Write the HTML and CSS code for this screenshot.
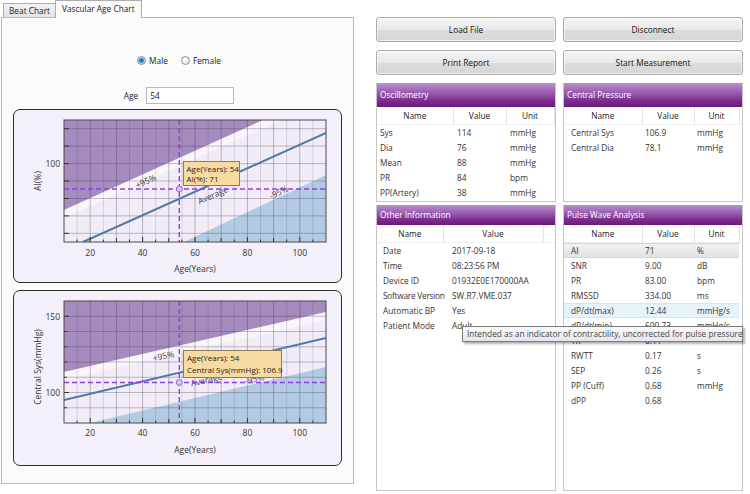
FILE: index.html
```html
<!DOCTYPE html>
<html>
<head>
<meta charset="utf-8">
<link rel="stylesheet" href="styles.css">
</head>
<body>
<div class="app">
  <div class="left">
    <div class="tabs">
      <div class="tab">Beat Chart</div>
      <div class="tab active">Vascular Age Chart</div>
    </div>
    <div class="tab-panel">
      <div class="gender">
        <span class="radio-item"><span class="radio checked"></span>Male</span>
        <span class="radio-item"><span class="radio"></span>Female</span>
      </div>
      <div class="age-row"><span class="age-label">Age</span><div class="age-input">54</div></div>

      <div class="chart chart1">
        <svg width="329" height="174" viewBox="0 0 329 174">
          <defs><clipPath id="c1"><rect x="51" y="11" width="262" height="122"/></clipPath></defs>
          <g clip-path="url(#c1)">
            <rect x="51" y="11" width="262" height="122" fill="#f2ecf7"/>
            <polygon points="51,11 250,11 51,101" fill="#a68bbf"/>
            <polygon points="250,11 268,11 51,109 51,101" fill="#ffffff" opacity="0.5"/>
            <polygon points="171,133 313,66 313,133" fill="#b2cbe2"/>
            <path d="M64.1 11V133M90.3 11V133M116.5 11V133M142.7 11V133M168.9 11V133M195.1 11V133M221.3 11V133M247.5 11V133M273.7 11V133M299.9 11V133" stroke="rgba(60,50,70,0.16)" stroke-width="1"/>
            <path d="M77.2 11V133M103.4 11V133M129.6 11V133M155.8 11V133M182 11V133M208.2 11V133M234.4 11V133M260.6 11V133M286.8 11V133" stroke="rgba(60,50,70,0.32)" stroke-width="1"/>
            <path d="M51 19.7H313M51 37.1H313M51 54.6H313M51 72H313M51 89.5H313M51 106.9H313M51 124.3H313" stroke="rgba(60,50,70,0.3)" stroke-width="1"/>
            <line x1="70" y1="133" x2="313" y2="24" stroke="#4f7aa8" stroke-width="2"/>
            <text class="band-label" transform="translate(134,75) rotate(-24)">+95%</text>
            <text class="band-label" transform="translate(201,89) rotate(-24)">Average</text>
            <text class="band-label" transform="translate(267,86) rotate(-25)">-95%</text>
            <line x1="51" y1="80" x2="313" y2="80" class="cross"/>
            <line x1="166.3" y1="11" x2="166.3" y2="133" class="cross"/>
            <circle cx="166.3" cy="80" r="3" fill="#d9c6ee" stroke="#9c5fd0" stroke-width="1"/>
          </g>
          <rect x="51" y="11" width="262" height="122" fill="none" stroke="#4a4a4a" stroke-width="1"/>
          <path d="M77.2 133V128M129.6 133V128M182 133V128M234.4 133V128M286.8 133V128M103.4 133V129M155.8 133V129M208.2 133V129M260.6 133V129M64.1 133V130.5M90.3 133V130.5M116.5 133V130.5M142.7 133V130.5M168.9 133V130.5M195.1 133V130.5M221.3 133V130.5M247.5 133V130.5M273.7 133V130.5M299.9 133V130.5" stroke="#333" stroke-width="1"/>
          <path d="M51 19.7H56M51 37.1H56M51 54.6H56M51 72H56M51 89.5H56M51 106.9H56M51 124.3H56" stroke="#333" stroke-width="1"/>
          <text class="tick" x="47" y="57.5" text-anchor="end">100</text>
          <text class="tick" x="77.2" y="147" text-anchor="middle">20</text>
          <text class="tick" x="129.6" y="147" text-anchor="middle">40</text>
          <text class="tick" x="182" y="147" text-anchor="middle">60</text>
          <text class="tick" x="234.4" y="147" text-anchor="middle">80</text>
          <text class="tick" x="286.8" y="147" text-anchor="middle">100</text>
          <text class="axis-title" x="182" y="163" text-anchor="middle">Age(Years)</text>
          <text class="axis-title" transform="translate(28,72) rotate(-90)" text-anchor="middle">AI(%)</text>
          <rect x="170.5" y="52.5" width="56" height="24" fill="#f7dba1" stroke="#8d7d5c" stroke-width="1"/>
          <text class="tip" x="173.5" y="62.5">Age(Years): 54</text>
          <text class="tip" x="173.5" y="73">AI(%): 71</text>
        </svg>
      </div>

      <div class="chart chart2">
        <svg width="329" height="176" viewBox="0 0 329 176">
          <defs><clipPath id="c2"><rect x="51" y="11" width="262" height="122"/></clipPath></defs>
          <g clip-path="url(#c2)">
            <rect x="51" y="11" width="262" height="122" fill="#f2ecf7"/>
            <polygon points="51,11 313,11 313,22 51,82" fill="#a68bbf"/>
            <polygon points="51,82 313,22 313,30 51,90" fill="#ffffff" opacity="0.5"/>
            <polygon points="77,133 313,77 313,133" fill="#b2cbe2"/>
            <path d="M64.1 11V133M90.3 11V133M116.5 11V133M142.7 11V133M168.9 11V133M195.1 11V133M221.3 11V133M247.5 11V133M273.7 11V133M299.9 11V133" stroke="rgba(60,50,70,0.16)" stroke-width="1"/>
            <path d="M77.2 11V133M103.4 11V133M129.6 11V133M155.8 11V133M182 11V133M208.2 11V133M234.4 11V133M260.6 11V133M286.8 11V133" stroke="rgba(60,50,70,0.32)" stroke-width="1"/>
            <path d="M51 26.25H313M51 41.5H313M51 56.75H313M51 72H313M51 87.25H313M51 102.5H313M51 117.75H313" stroke="rgba(60,50,70,0.3)" stroke-width="1"/>
            <line x1="51" y1="110" x2="313" y2="48" stroke="#4f7aa8" stroke-width="2"/>
            <text class="band-label" transform="translate(151,69) rotate(-13)">+95%</text>
            <text class="band-label" transform="translate(194,93) rotate(-13)">Average</text>
            <text class="band-label" transform="translate(242,92) rotate(-13)">-95%</text>
            <line x1="51" y1="92.5" x2="313" y2="92.5" class="cross"/>
            <line x1="166.3" y1="11" x2="166.3" y2="133" class="cross"/>
            <circle cx="166.3" cy="92.5" r="3" fill="#d9c6ee" stroke="#9c5fd0" stroke-width="1"/>
          </g>
          <rect x="51" y="11" width="262" height="122" fill="none" stroke="#4a4a4a" stroke-width="1"/>
          <path d="M77.2 133V128M129.6 133V128M182 133V128M234.4 133V128M286.8 133V128M103.4 133V129M155.8 133V129M208.2 133V129M260.6 133V129M64.1 133V130.5M90.3 133V130.5M116.5 133V130.5M142.7 133V130.5M168.9 133V130.5M195.1 133V130.5M221.3 133V130.5M247.5 133V130.5M273.7 133V130.5M299.9 133V130.5" stroke="#333" stroke-width="1"/>
          <path d="M51 26.25H56M51 41.5H54M51 56.75H54M51 72H54M51 87.25H54M51 102.5H56M51 117.75H54" stroke="#333" stroke-width="1"/>
          <text class="tick" x="47" y="29.5" text-anchor="end">150</text>
          <text class="tick" x="47" y="105.5" text-anchor="end">100</text>
          <text class="tick" x="77.2" y="146" text-anchor="middle">20</text>
          <text class="tick" x="129.6" y="146" text-anchor="middle">40</text>
          <text class="tick" x="182" y="146" text-anchor="middle">60</text>
          <text class="tick" x="234.4" y="146" text-anchor="middle">80</text>
          <text class="tick" x="286.8" y="146" text-anchor="middle">100</text>
          <text class="axis-title" x="182" y="163" text-anchor="middle">Age(Years)</text>
          <text class="axis-title" transform="translate(28,77) rotate(-90)" text-anchor="middle">Central Sys(mmHg)</text>
          <rect x="170.5" y="60.5" width="98" height="27" fill="#f7dba1" stroke="#8d7d5c" stroke-width="1"/>
          <text class="tip" x="174" y="71">Age(Years): 54</text>
          <text class="tip" x="174" y="83">Central Sys(mmHg): 106.9</text>
        </svg>
      </div>
    </div>
  </div>

  <div class="right">
    <div class="col">
      <button class="btn">Load File</button>
      <button class="btn">Print Report</button>
      <section class="panel top">
        <div class="panel-head">Oscillometry</div>
        <table class="tbl osc">
          <tr class="hd"><th>Name</th><th>Value</th><th>Unit</th><th class="fill"></th></tr>
          <tr><td>Sys</td><td>114</td><td>mmHg</td><td></td></tr>
          <tr><td>Dia</td><td>76</td><td>mmHg</td><td></td></tr>
          <tr><td>Mean</td><td>88</td><td>mmHg</td><td></td></tr>
          <tr><td>PR</td><td>84</td><td>bpm</td><td></td></tr>
          <tr><td>PP(Artery)</td><td>38</td><td>mmHg</td><td></td></tr>
        </table>
      </section>
      <section class="panel bottom">
        <div class="panel-head short">Other Information</div>
        <table class="tbl other">
          <tr class="hd"><th>Name</th><th>Value</th><th class="fill"></th></tr>
          <tr><td>Date</td><td>2017-09-18</td><td></td></tr>
          <tr><td>Time</td><td>08:23:56 PM</td><td></td></tr>
          <tr><td>Device ID</td><td>01932E0E170000AA</td><td></td></tr>
          <tr><td class="tight">Software Version</td><td>SW.R7.VME.037</td><td></td></tr>
          <tr><td>Automatic BP</td><td>Yes</td><td></td></tr>
          <tr><td>Patient Mode</td><td>Adult</td><td></td></tr>
        </table>
      </section>
    </div>
    <div class="col">
      <button class="btn">Disconnect</button>
      <button class="btn">Start Measurement</button>
      <section class="panel top">
        <div class="panel-head">Central Pressure</div>
        <table class="tbl cp">
          <tr class="hd"><th>Name</th><th>Value</th><th>Unit</th><th class="fill"></th></tr>
          <tr><td>Central Sys</td><td>106.9</td><td>mmHg</td><td></td></tr>
          <tr><td>Central Dia</td><td>78.1</td><td>mmHg</td><td></td></tr>
        </table>
      </section>
      <section class="panel bottom">
        <div class="panel-head short">Pulse Wave Analysis</div>
        <table class="tbl cp">
          <tr class="hd"><th>Name</th><th>Value</th><th>Unit</th><th class="fill"></th></tr>
          <tr class="sel"><td>AI</td><td>71</td><td>%</td><td></td></tr>
          <tr><td>SNR</td><td>9.00</td><td>dB</td><td></td></tr>
          <tr><td>PR</td><td>83.00</td><td>bpm</td><td></td></tr>
          <tr><td>RMSSD</td><td>334.00</td><td>ms</td><td></td></tr>
          <tr class="hover"><td>dP/dt(max)</td><td>12.44</td><td>mmHg/s</td><td></td></tr>
          <tr class="under"><td>dP/dt(min)</td><td>600.73</td><td>mmHg/s</td><td></td></tr>
          <tr><td>TR</td><td>0.11</td><td></td><td></td></tr>
          <tr><td>RWTT</td><td>0.17</td><td>s</td><td></td></tr>
          <tr><td>SEP</td><td>0.26</td><td>s</td><td></td></tr>
          <tr><td>PP (Cuff)</td><td>0.68</td><td>mmHg</td><td></td></tr>
          <tr><td>dPP</td><td>0.68</td><td></td><td></td></tr>
        </table>
      </section>
    </div>
  </div>

  <div class="tooltip">Intended as an indicator of contractility, uncorrected for pulse pressure</div>
</div>
</body>
</html>
```

FILE: styles.css
```css
html, body {
  margin: 0;
  padding: 0;
  background: #ffffff;
  overflow: hidden;
}
body {
  font-family: "Open Sans", "Noto Sans", sans-serif;
  font-size: 8.3px;
  color: #222;
}
.app {
  position: relative;
  display: flex;
  width: 750px;
  height: 494px;
}

/* ---------- left tab control ---------- */
.left {
  width: 353px;
  margin-left: 1px;
  display: flex;
  flex-direction: column;
}
.tabs {
  height: 17px;
  display: flex;
  align-items: flex-end;
  padding-left: 2px;
  position: relative;
  z-index: 2;
}
.tab {
  height: 14px;
  box-sizing: border-box;
  padding: 0 5px;
  line-height: 13px;
  border: 1px solid #acacac;
  border-bottom: none;
  background: linear-gradient(#f2f2f2, #e3e3e3);
  color: #222;
  white-space: nowrap;
}
.tab.active {
  height: 18px;
  margin-bottom: -1px;
  margin-left: -1px;
  line-height: 15px;
  background: #fbfbfb;
  padding: 0 6px;
}
.tab-panel {
  height: 467px;
  box-sizing: border-box;
  border: 1px solid #b9b9b9;
  background: #fbfbfb;
  display: flex;
  flex-direction: column;
  padding-top: 36px;
}
.gender {
  display: flex;
  justify-content: center;
  gap: 13px;
  height: 12px;
  align-items: center;
  padding-left: 3px;
}
.radio-item {
  display: flex;
  align-items: center;
  color: #222;
}
.radio {
  width: 9px;
  height: 9px;
  box-sizing: border-box;
  border-radius: 50%;
  border: 1px solid #8e9194;
  background: radial-gradient(circle at 45% 40%, #ffffff, #dadada);
  margin-right: 3px;
}
.radio.checked {
  background: radial-gradient(circle, #256ea0 0, #3a88bb 2px, #9fcbe6 2.8px, #eef4f8 4px);
}
.age-row {
  margin-top: 21px;
  display: flex;
  justify-content: center;
  align-items: center;
  gap: 8px;
  padding-left: 3px;
}
.age-label {
  color: #222;
}
.age-input {
  width: 88px;
  height: 17px;
  box-sizing: border-box;
  border: 1px solid #b5b8bd;
  background: #fff;
  padding-left: 3px;
  line-height: 15px;
}
.chart {
  margin-left: 11px;
  width: 329px;
  box-sizing: border-box;
  border: 1.5px solid #2e2e2e;
  border-radius: 7px;
  background: #f4f0f9;
  overflow: hidden;
}
.chart1 {
  margin-top: 5px;
  height: 174px;
}
.chart2 {
  margin-top: 7px;
  height: 176px;
}
.chart svg {
  display: block;
  margin: -1.5px 0 0 -1.5px;
}
.chart text {
  font-family: "Open Sans", "Noto Sans", sans-serif;
  fill: #333;
}
.chart .tick {
  font-size: 8.5px;
}
.chart .axis-title {
  font-size: 8.5px;
}
.chart .band-label {
  font-size: 8.5px;
  text-anchor: middle;
  fill: #444;
}
.chart .tip {
  font-size: 8px;
  fill: #222;
}
.chart .cross {
  stroke: #8f3fe0;
  stroke-width: 1.4;
  stroke-dasharray: 5 3;
}

/* ---------- right side ---------- */
.right {
  margin-left: 22px;
  display: flex;
  gap: 7px;
  padding-top: 17px;
}
.col {
  width: 180px;
  display: flex;
  flex-direction: column;
}
.btn {
  height: 25px;
  margin: 0 0 8px 0;
  padding: 0;
  font-family: inherit;
  font-size: 8.3px;
  color: #111;
  border: 1px solid #a9a9a9;
  border-radius: 3px;
  background: linear-gradient(#f5f5f5, #e8e8e8 50%, #dcdcdc 51%, #d6d6d6);
  box-shadow: inset 0 0 0 1px rgba(255,255,255,0.6);
}
.panel {
  box-sizing: border-box;
  border: 1px solid #c6c6c6;
  border-top: none;
  background: #fff;
  overflow: hidden;
}
.panel.top {
  height: 119px;
}
.panel.bottom {
  margin-top: 3px;
  height: 286px;
}
.panel-head {
  height: 24px;
  margin: 0 -1px;
  padding-left: 4px;
  line-height: 24px;
  color: #fff;
  background: linear-gradient(#bc8fcd, #9656ab 45%, #7a2b8d 75%, #6a1a7d);
}
.panel-head.short {
  height: 20px;
  line-height: 19px;
}
.tbl {
  border-collapse: collapse;
  table-layout: fixed;
  width: 178px;
}
.tbl th {
  height: 17px;
  padding: 0;
  font-weight: normal;
  text-align: center;
  color: #222;
  border-right: 1px solid #e4e4e4;
  border-bottom: 1px solid #efefef;
}
.tbl th.fill {
  border-right: none;
}
.tbl td {
  height: 15px;
  padding: 0;
  line-height: 15px;
  white-space: nowrap;
  overflow: visible;
  color: #333;
}
.tbl td.tight {
  letter-spacing: -0.25px;
}
/* Oscillometry columns */
.osc th:nth-child(1), .osc td:nth-child(1) { width: 76px; }
.osc th:nth-child(2), .osc td:nth-child(2) { width: 52px; }
.osc th:nth-child(3), .osc td:nth-child(3) { width: 47px; }
.osc td:nth-child(1) { padding-left: 3px; }
.osc td:nth-child(2), .osc td:nth-child(3) { padding-left: 4px; }
/* Central / pulse wave columns */
.cp th:nth-child(1), .cp td:nth-child(1) { width: 78px; }
.cp th:nth-child(2), .cp td:nth-child(2) { width: 51px; }
.cp th:nth-child(3), .cp td:nth-child(3) { width: 44px; }
.cp td:nth-child(1) { padding-left: 7px; }
.cp td:nth-child(2), .cp td:nth-child(3) { padding-left: 3px; }
/* Other info columns */
.other th:nth-child(1), .other td:nth-child(1) { width: 66px; }
.other th:nth-child(2), .other td:nth-child(2) { width: 99px; }
.other td:nth-child(1) { padding-left: 6px; }
.other td:nth-child(2) { padding-left: 9px; }
.tbl td:first-child, .tbl th:first-child { box-sizing: border-box; }

.tbl tr.sel td:not(:last-child) {
  background: linear-gradient(#f1f1f1, #e1e1e1);
  box-shadow: inset 0 1px #d6d6d6, inset 0 -1px #d6d6d6;
}
.tbl tr.hover td:not(:last-child) {
  background: #e7f3fb;
  box-shadow: inset 0 1px #cfe6f6, inset 0 -1px #cfe6f6;
}

.tooltip {
  position: absolute;
  left: 462px;
  top: 326px;
  width: 281px;
  height: 16px;
  box-sizing: border-box;
  padding-left: 4px;
  line-height: 14px;
  font-size: 8.3px;
  color: #444;
  white-space: nowrap;
  border: 1px solid #7a7a7a;
  background: linear-gradient(#fbfbfb, #e6e6ec);
  box-shadow: 2px 2px 2px rgba(0,0,0,0.3);
}
```
